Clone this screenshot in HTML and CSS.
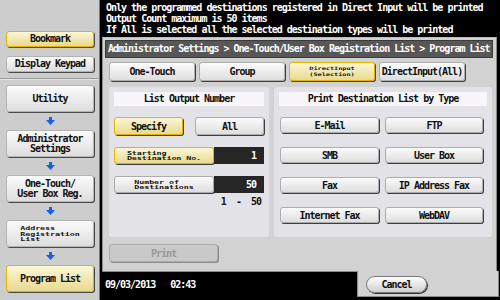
FILE: index.html
```html
<!DOCTYPE html>
<html lang="en">
<head>
  <meta charset="UTF-8">
  <title>Program List</title>
  <link rel="stylesheet" href="styles.css">
</head>
<body>

  <div id="screen">
    <div id="sidebar">
      <div class="side-top">
        <div class="side-btn active">Bookmark</div>
        <div class="side-btn">Display Keypad</div>
      </div>
      <div class="side-path">
        <div class="side-btn tall">Utility</div>
        <div class="arrow"><svg width="9" height="8" viewBox="0 0 9 8"><path d="M3 0h3v3h3l-4.5 5L0 3h3z" fill="#1560e8"/></svg></div>
        <div class="side-btn tall">Administrator<br>Settings</div>
        <div class="arrow"><svg width="9" height="8" viewBox="0 0 9 8"><path d="M3 0h3v3h3l-4.5 5L0 3h3z" fill="#1560e8"/></svg></div>
        <div class="side-btn tall">One-Touch/<br>User Box Reg.</div>
        <div class="arrow"><svg width="9" height="8" viewBox="0 0 9 8"><path d="M3 0h3v3h3l-4.5 5L0 3h3z" fill="#1560e8"/></svg></div>
        <div class="side-btn tall"><span class="squeeze">Address<br>Registration<br>List</span></div>
        <div class="arrow"><svg width="9" height="8" viewBox="0 0 9 8"><path d="M3 0h3v3h3l-4.5 5L0 3h3z" fill="#1560e8"/></svg></div>
        <div class="side-btn tall active">Program List</div>
      </div>
    </div>

    <div id="main">
      <div class="notice">
        Only the programmed destinations registered in Direct Input will be printed<br>
        Output Count maximum is 50 items<br>
        If All is selected all the selected destination types will be printed
      </div>

      <div class="panel">
        <div class="crumbs">Administrator Settings &gt; One-Touch/User Box Registration List &gt; Program List</div>

        <div class="tabs">
          <div class="btn">One-Touch</div>
          <div class="btn">Group</div>
          <div class="btn active"><span class="squeeze narrow">DirectInput<br>(Selection)</span></div>
          <div class="btn">DirectInput(All)</div>
        </div>

        <div class="boxes">
          <div class="box box-left">
            <div class="box-title">List Output Number</div>
            <div class="pair">
              <div class="btn active">Specify</div>
              <div class="btn">All</div>
            </div>
            <div class="field">
              <div class="btn active"><span class="squeeze">Starting<br>Destination No.</span></div>
              <div class="value">1</div>
            </div>
            <div class="field">
              <div class="btn"><span class="squeeze">Number of<br>Destinations</span></div>
              <div class="value">50</div>
            </div>
            <div class="range">1 &nbsp;- &nbsp;50</div>
          </div>

          <div class="box box-right">
            <div class="box-title">Print Destination List by Type</div>
            <div class="types">
              <div class="btn">E-Mail</div>
              <div class="btn">FTP</div>
              <div class="btn">SMB</div>
              <div class="btn">User Box</div>
              <div class="btn">Fax</div>
              <div class="btn">IP Address Fax</div>
              <div class="btn">Internet Fax</div>
              <div class="btn">WebDAV</div>
            </div>
          </div>
        </div>

        <div class="btn print">Print</div>
      </div>

      <div class="footer">
        <div class="clock"><span>09/03/2013</span><span>02:43</span></div>
        <div class="cancel-tab">
          <div class="cancel">Cancel</div>
        </div>
      </div>
    </div>
  </div>

</body>
</html>
```

FILE: styles.css
```css
:root {
  --mono: "DejaVu Sans Mono", "Liberation Mono", monospace;
  --side-bg: #cdcdcd;
  --panel-bg: #d2d2d2;
  --box-bg: #e3e2e6;
  --btn-top: #fbfbfb;
  --btn-bottom: #dedede;
  --yellow-top: #fcf6d6;
  --yellow-bottom: #e9d98f;
}

* {
  margin: 0;
  padding: 0;
  box-sizing: border-box;
}

body {
  width: 500px;
  height: 300px;
  overflow: hidden;
  background: #000;
  font-family: var(--mono);
  font-size: 10px;
  font-weight: bold;
  letter-spacing: -1px;
  color: #111;
}

#screen {
  display: flex;
  height: 300px;
}

/* left column */

#sidebar {
  width: 100px;
  background: var(--side-bg);
  border-right: 1px solid #7a7a7a;
  display: flex;
  flex-direction: column;
}

.side-top {
  height: 79px;
  padding: 31px 0 0 6px;
  display: flex;
  flex-direction: column;
  gap: 9px;
  border-bottom: 1px solid #9a9a9a;
  box-shadow: 0 1px 0 #e6e6e6;
}

.side-path {
  padding: 6px 0 0 6px;
  display: flex;
  flex-direction: column;
}

.side-btn {
  width: 88px;
  height: 16px;
  display: flex;
  align-items: center;
  justify-content: center;
  text-align: center;
  line-height: 10px;
  border: 1px solid #b4b4b4;
  border-radius: 3px;
  background: linear-gradient(var(--btn-top), var(--btn-bottom));
  box-shadow: 1px 1px 0 #4a4a4a;
}

.side-btn.tall {
  height: 27px;
}

.side-btn.active,
.btn.active {
  background: linear-gradient(var(--yellow-top), var(--yellow-bottom));
  border-color: #e2b400;
}

.arrow {
  height: 18px;
  display: flex;
  align-items: center;
  justify-content: center;
  width: 88px;
}

/* two or three lines squeezed into one button */
.squeeze {
  display: inline-block;
  text-align: left;
  font-size: 8.4px;
  letter-spacing: -0.1px;
  line-height: 8.5px;
  transform: scaleY(0.66);
}

.squeeze.narrow {
  font-size: 7px;
  text-align: center;
}

/* right column */

#main {
  flex: 1;
  display: flex;
  flex-direction: column;
  padding-left: 2px;
}

.notice {
  height: 37px;
  padding: 2px 0 0 4px;
  color: #fff;
  line-height: 11px;
  white-space: nowrap;
}

.panel {
  width: 395px;
  height: 235px;
  background: var(--panel-bg);
  border: 1px solid #8a8a8a;
  border-top-color: #bdbdbd;
  padding: 2px 3px 0 2px;
}

.crumbs {
  height: 18px;
  background: #575757;
  border: 1px solid #3a3a3a;
  color: #fff;
  line-height: 16px;
  padding-left: 2px;
  white-space: nowrap;
}

.btn {
  height: 18px;
  display: flex;
  align-items: center;
  justify-content: center;
  text-align: center;
  border: 1px solid #adadad;
  border-radius: 3px;
  background: linear-gradient(var(--btn-top), var(--btn-bottom));
  box-shadow: 1px 1px 0 #3e3e3e;
  white-space: nowrap;
}

.tabs {
  display: grid;
  grid-template-columns: repeat(4, 86px);
  gap: 4px;
  margin: 4px 0 0 4px;
}

.tabs .btn {
  height: 19px;
}

.boxes {
  display: flex;
  gap: 5px;
  margin: 6px 0 0 4px;
}

.box {
  height: 150px;
  background: var(--box-bg);
  border-radius: 3px;
  padding: 5px;
}

.box-left {
  width: 160px;
}

.box-right {
  width: 218px;
}

.box-title {
  height: 14px;
  background: #f8f6fa;
  text-align: center;
  line-height: 14px;
}

.pair {
  display: flex;
  justify-content: space-between;
  margin-top: 11px;
}

.pair .btn {
  width: 69px;
}

.field {
  display: flex;
  margin-top: 12px;
}

.field .btn {
  width: 100px;
  height: 17px;
}

.value {
  width: 50px;
  height: 17px;
  background: #262626;
  color: #fff;
  text-align: right;
  line-height: 17px;
  padding-right: 8px;
}

.range {
  text-align: right;
  padding-right: 3px;
  margin-top: 3px;
}

.types {
  display: grid;
  grid-template-columns: 99px 98px;
  column-gap: 6px;
  row-gap: 14px;
  margin: 11px 0 0 1px;
}

.types .btn {
  height: 16px;
}

.btn.print {
  width: 109px;
  margin: 7px 0 0 4px;
  background: #c9c9c9;
  border-color: #a9a9a9;
  color: #999;
  box-shadow: 1px 1px 0 #8c8c8c;
}

.footer {
  display: flex;
  height: 28px;
}

.clock {
  flex: 1;
  color: #fff;
  display: flex;
  gap: 15px;
  padding: 7px 0 0 3px;
}

.cancel-tab {
  width: 142px;
  height: 26px;
  margin-top: -1px;
  margin-right: 1px;
  background: var(--panel-bg);
  border: 1px solid #8a8a8a;
  border-top: none;
  padding: 5px 0 0 8px;
}

.cancel {
  width: 61px;
  height: 17px;
  border: 1px solid #777;
  border-radius: 9px;
  background: linear-gradient(#fdfdfd, #cfcfcf);
  box-shadow: 1px 1px 0 #333;
  text-align: center;
  line-height: 15px;
}
```
